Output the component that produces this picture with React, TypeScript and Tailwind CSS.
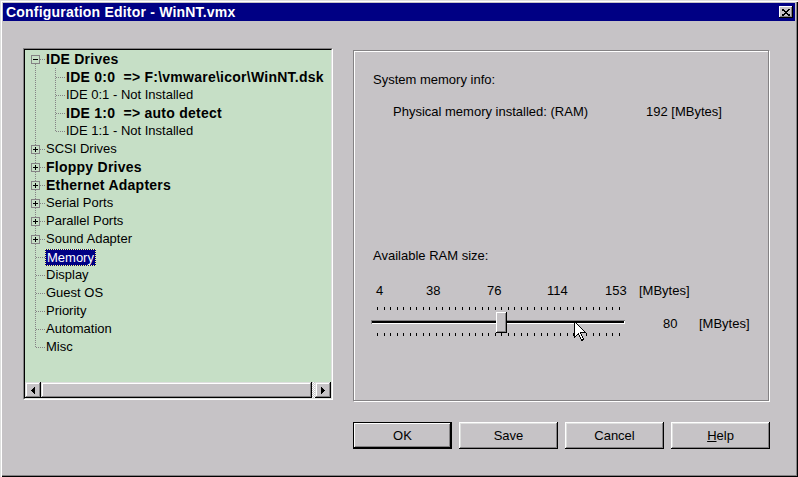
import React from 'react';

type TreeItem = {
  label: string;
  level: 0 | 1;
  bold?: boolean;
  box?: '+' | '-';
  selected?: boolean;
};

const items: TreeItem[] = [
  { label: 'IDE Drives', level: 0, bold: true, box: '-' },
  { label: 'IDE 0:0  => F:\\vmware\\icor\\WinNT.dsk', level: 1, bold: true },
  { label: 'IDE 0:1 - Not Installed', level: 1 },
  { label: 'IDE 1:0  => auto detect', level: 1, bold: true },
  { label: 'IDE 1:1 - Not Installed', level: 1 },
  { label: 'SCSI Drives', level: 0, box: '+' },
  { label: 'Floppy Drives', level: 0, bold: true, box: '+' },
  { label: 'Ethernet Adapters', level: 0, bold: true, box: '+' },
  { label: 'Serial Ports', level: 0, box: '+' },
  { label: 'Parallel Ports', level: 0, box: '+' },
  { label: 'Sound Adapter', level: 0, box: '+' },
  { label: 'Memory', level: 0, selected: true },
  { label: 'Display', level: 0 },
  { label: 'Guest OS', level: 0 },
  { label: 'Priority', level: 0 },
  { label: 'Automation', level: 0 },
  { label: 'Misc', level: 0 },
];

const ROW = 18;

// dotted connectors + expand boxes, drawn behind the rows
const TreeLines: React.FC = () => {
  const last = items.length - 1;
  return (
    <svg
      className="absolute left-0 top-0 pointer-events-none"
      width={306}
      height={332}
      shapeRendering="crispEdges"
    >
      <g stroke="#848284" strokeWidth={1} strokeDasharray="1 1">
        <line x1={10.5} y1={14} x2={10.5} y2={last * ROW + 10} />
        <line x1={30.5} y1={18} x2={30.5} y2={4 * ROW + 10} />
        {items.map((it, i) => {
          const y = i * ROW + 9.5;
          if (it.level === 1) return <line key={i} x1={31} y1={y} x2={40} y2={y} />;
          return <line key={i} x1={it.box ? 15 : 11} y1={y} x2={20} y2={y} />;
        })}
      </g>
      {items.map((it, i) => {
        if (!it.box) return null;
        const top = i * ROW + 5;
        return (
          <g key={i}>
            <rect x={6.5} y={top + 0.5} width={8} height={8} fill="#c6dfc6" stroke="#848284" />
            <line x1={8} y1={top + 4.5} x2={13} y2={top + 4.5} stroke="#000" />
            {it.box === '+' && <line x1={10.5} y1={top + 2} x2={10.5} y2={top + 7} stroke="#000" />}
          </g>
        );
      })}
    </svg>
  );
};

const Tree: React.FC = () => (
  <div className="w-[310px] h-[352px] flex border border-t-[#848284] border-l-[#848284] border-b-white border-r-white">
    <div className="flex-1 flex flex-col border border-t-black border-l-black border-b-[#dedfde] border-r-[#dedfde] bg-[#c6dfc6]">
      <div className="relative flex-1 overflow-hidden">
        <TreeLines />
        <div className="relative flex flex-col">
          {items.map((it, i) => (
            <div
              key={i}
              className={`h-[18px] flex items-center whitespace-pre text-black ${it.level === 1 ? 'pl-[40px]' : 'pl-[20px]'} ${it.bold ? 'font-bold text-[14px] tracking-[0.25px]' : 'text-[13px]'}`}
            >
              {it.selected ? (
                <span className="h-[17px] leading-[15px] px-[1px] bg-[#000084] text-white border border-dotted border-[#ffff84]">
                  {it.label}
                </span>
              ) : (
                <span className="pl-[1px]">{it.label}</span>
              )}
            </div>
          ))}
        </div>
      </div>
      <div className="h-[16px] flex">
        <div className="w-[16px] h-[16px] flex items-center justify-center bg-[#c6c3c6] shadow-[inset_-1px_-1px_#000,inset_1px_1px_#dedfde,inset_-2px_-2px_#848284,inset_2px_2px_#fff]">
          <svg width={4} height={7} shapeRendering="crispEdges">
            <path d="M4 0 L0 3.5 L4 7 Z" fill="#000" />
          </svg>
        </div>
        <div className="w-[271px] h-[16px] bg-[#c6c3c6] shadow-[inset_-1px_-1px_#000,inset_1px_1px_#dedfde,inset_-2px_-2px_#848284,inset_2px_2px_#fff]" />
        <div className="w-[3px] h-[16px] bg-[image:repeating-conic-gradient(#fff_0%_25%,#c6c3c6_0%_50%)] [background-size:2px_2px]" />
        <div className="w-[16px] h-[16px] flex items-center justify-center bg-[#c6c3c6] shadow-[inset_-1px_-1px_#000,inset_1px_1px_#dedfde,inset_-2px_-2px_#848284,inset_2px_2px_#fff]">
          <svg width={4} height={7} shapeRendering="crispEdges">
            <path d="M0 0 L4 3.5 L0 7 Z" fill="#000" />
          </svg>
        </div>
      </div>
    </div>
  </div>
);

const Ticks: React.FC = () => {
  const n = 38;
  return (
    <svg width={254} height={4} shapeRendering="crispEdges" className="block">
      {Array.from({ length: n }).map((_, i) => {
        const x = Math.round(6 + (i * 242) / (n - 1)) + 0.5;
        return <line key={i} x1={x} y1={0} x2={x} y2={3} stroke="#000" />;
      })}
    </svg>
  );
};

const Cursor: React.FC = () => (
  <svg width={13} height={21} className="absolute left-[220px] top-[270px]" shapeRendering="crispEdges">
    <path
      d="M0.5 0.5 L0.5 16.5 L4.5 12.5 L7.5 19.5 L9.5 18.5 L6.5 11.5 L11.5 11.5 Z"
      fill="#fff"
      stroke="#000"
      strokeWidth={1}
    />
  </svg>
);

const MemoryPanel: React.FC = () => (
  <div className="relative w-[416px] h-[351px] border border-[#848284] shadow-[inset_1px_1px_#fff,1px_1px_#fff] pl-[19px] flex flex-col text-[13px] leading-[16px] text-black">
    <div className="mt-[21px]">System memory info:</div>
    <div className="mt-[16px] flex">
      <span className="ml-[20px] w-[253px]">Physical memory installed: (RAM)</span>
      <span>192 [MBytes]</span>
    </div>
    <div className="mt-[128px]">Available RAM size:</div>
    <div className="mt-[19px] ml-[3px] flex">
      <span className="w-[50px]">4</span>
      <span className="w-[61px]">38</span>
      <span className="w-[60px]">76</span>
      <span className="w-[58px]">114</span>
      <span className="w-[34px]">153</span>
      <span>[MBytes]</span>
    </div>
    <div className="mt-[8px] ml-[-2px]">
      <Ticks />
    </div>
    <div className="ml-[-2px] h-[22px] flex">
      <div className="relative w-[254px] h-[22px]">
        <div className="absolute left-0 right-0 top-[9px] h-[4px] bg-[#000] shadow-[inset_1px_1px_#848284,inset_-1px_-1px_#fff]" />
        <div className="absolute left-[125px] top-[1px] w-[11px] h-[21px] bg-[#c6c3c6] shadow-[inset_-1px_-1px_#000,inset_1px_1px_#fff,inset_-2px_-2px_#848284]" />
      </div>
      <span className="ml-[38px] mt-[5px] w-[36px]">80</span>
      <span className="mt-[5px]">[MBytes]</span>
    </div>
    <div className="ml-[-2px]">
      <Ticks />
    </div>
    <Cursor />
  </div>
);

const Button: React.FC<{ isDefault?: boolean; children: React.ReactNode }> = ({ isDefault, children }) =>
  isDefault ? (
    <div className="w-[99px] h-[27px] border border-black flex">
      <div className="flex-1 flex items-center justify-center text-[13px] shadow-[inset_-1px_-1px_#000,inset_1px_1px_#fff,inset_-2px_-2px_#848284]">
        {children}
      </div>
    </div>
  ) : (
    <div className="w-[99px] h-[27px] flex items-center justify-center text-[13px] shadow-[inset_-1px_-1px_#000,inset_1px_1px_#fff,inset_-2px_-2px_#848284,inset_2px_2px_#dedfde]">
      {children}
    </div>
  );

export default function App() {
  return (
    <div
      className="w-[798px] h-[477px] bg-[#c6c3c6] p-[3px] flex flex-col shadow-[inset_1px_1px_#dedfde,inset_2px_2px_#fff,inset_-1px_-1px_#000,inset_-2px_-2px_#848284]"
      style={{ fontFamily: '"Liberation Sans", Arial, sans-serif' }}
    >
      <div className="h-[18px] bg-[#000084] flex items-center justify-between pl-[3px] pr-[2px]">
        <span className="text-white font-bold text-[14px] tracking-[0.2px] leading-[18px]">Configuration Editor - WinNT.vmx</span>
        <div className="w-[14px] h-[12px] flex items-center justify-center bg-[#c6c3c6] shadow-[inset_-1px_-1px_#000,inset_1px_1px_#fff,inset_-2px_-2px_#848284]">
          <svg width={8} height={7} shapeRendering="crispEdges">
            <path d="M0 0 L8 7 M8 0 L0 7" stroke="#000" strokeWidth={1.6} />
          </svg>
        </div>
      </div>
      <div className="flex pt-[27px] pl-[20px]">
        <Tree />
        <div className="ml-[20px] mt-[2px] flex flex-col">
          <MemoryPanel />
          <div className="mt-[21px] flex gap-[7px] text-black">
            <Button isDefault>OK</Button>
            <Button>Save</Button>
            <Button>Cancel</Button>
            <Button>
              <span>
                <span className="underline">H</span>elp
              </span>
            </Button>
          </div>
        </div>
      </div>
    </div>
  );
}
